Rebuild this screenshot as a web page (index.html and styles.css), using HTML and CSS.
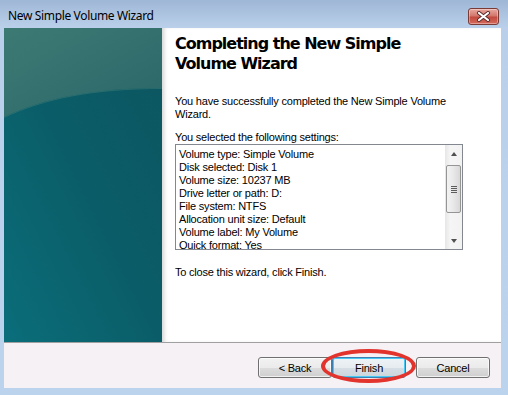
FILE: index.html
```html
<!DOCTYPE html>
<html lang="en">
<head>
  <meta charset="UTF-8">
  <title>New Simple Volume Wizard</title>
  <link rel="stylesheet" href="styles.css">
</head>
<body>

  <div class="window">
    <div class="titlebar">
      <span class="title">New Simple Volume Wizard</span>
      <div class="close">
        <svg width="15" height="11" viewBox="0 0 15 11">
          <path d="M3 2 L12 9 M12 2 L3 9" stroke="#5a2a2a" stroke-width="4" stroke-linecap="round"/>
          <path d="M3 2 L12 9 M12 2 L3 9" stroke="#ffffff" stroke-width="2.2" stroke-linecap="round"/>
        </svg>
      </div>
    </div>

    <div class="client">
      <div class="main">
        <!-- 左の帯 -->
        <div class="banner">
          <svg width="158" height="314" viewBox="0 0 158 314" preserveAspectRatio="none">
            <defs>
              <linearGradient id="base" x1="1" y1="0" x2="0" y2="1">
                <stop offset="0" stop-color="#0c5560"/>
                <stop offset="0.5" stop-color="#0a5d68"/>
                <stop offset="1" stop-color="#0a6e7a"/>
              </linearGradient>
              <linearGradient id="gloss" x1="0" y1="0" x2="1" y2="1">
                <stop offset="0" stop-color="#3e7a74"/>
                <stop offset="1" stop-color="#2a6668"/>
              </linearGradient>
            </defs>
            <rect width="158" height="314" fill="url(#base)"/>
            <path d="M0 0 H158 V60 C90 60 40 70 0 89 Z" fill="url(#gloss)"/>
            <path d="M158 60.5 C90 60.5 40 70.5 0 89.5" fill="none" stroke="#3a7874" stroke-width="1" opacity="0.6"/>
          </svg>
        </div>

        <div class="content">
          <h1>Completing the New Simple<br>Volume Wizard</h1>
          <p class="intro">You have successfully completed the New Simple Volume<br>Wizard.</p>
          <p class="label">You selected the following settings:</p>

          <div class="listbox">
            <div class="items">
              <div>Volume type: Simple Volume</div>
              <div>Disk selected: Disk 1</div>
              <div>Volume size: 10237 MB</div>
              <div>Drive letter or path: D:</div>
              <div>File system: NTFS</div>
              <div>Allocation unit size: Default</div>
              <div>Volume label: My Volume</div>
              <div>Quick format: Yes</div>
            </div>
            <div class="scrollbar">
              <div class="arrow"><span class="tri-up"></span></div>
              <div class="thumb"><span class="grip"></span></div>
              <div class="track"></div>
              <div class="arrow"><span class="tri-down"></span></div>
            </div>
          </div>

          <p class="closing">To close this wizard, click Finish.</p>
        </div>
      </div>

      <div class="footer">
        <button class="btn">&lt; Back</button>
        <button class="btn default">Finish</button>
        <button class="btn cancel">Cancel</button>
        <div class="circle"></div>
      </div>
    </div>
  </div>

</body>
</html>
```

FILE: styles.css
```css
body {
  margin: 0;
  background: #bcd3ee;
  font-family: "Liberation Sans", Arial, sans-serif;
  font-size: 11px;
  letter-spacing: -0.2px;
  color: #000;
}

.window {
  width: 508px;
  height: 395px;
  display: flex;
  flex-direction: column;
  background: linear-gradient(#9fb7d6, #bad0ea 28px, #bcd3ee);
}

.titlebar {
  height: 28px;
  display: flex;
  align-items: flex-start;
  justify-content: space-between;
  padding: 8px 9px 0 8px;
  box-sizing: border-box;
}

.title {
  font-family: "Noto Sans", "Open Sans", sans-serif;
  font-size: 12px;
  line-height: 16px;
  letter-spacing: -0.35px;
  color: #000;
}

.close {
  width: 31px;
  height: 17px;
  box-sizing: border-box;
  border: 1px solid #7a3a36;
  border-radius: 3px;
  background: linear-gradient(#e8a89e, #d3776c 45%, #c24a3e 55%, #d46a5c);
  display: flex;
  align-items: center;
  justify-content: center;
  box-shadow: inset 0 0 0 1px rgba(255, 255, 255, 0.35);
}

.client {
  flex: 1;
  margin: 0 7px 7px 4px;
  display: flex;
  flex-direction: column;
}

.main {
  height: 314px;
  display: flex;
  border-bottom: 1px solid #a0a0a0;
  background: #fff;
}

.banner {
  width: 158px;
  height: 314px;
}

.banner svg {
  display: block;
}

.content {
  flex: 1;
  padding: 6px 0 0 13px;
  box-shadow: inset 4px 0 4px -2px rgba(0, 0, 0, 0.18);
}

h1 {
  margin: 0;
  font-family: "DejaVu Sans", Verdana, sans-serif;
  font-weight: bold;
  font-size: 16px;
  line-height: 20px;
  letter-spacing: -1px;
}

p {
  margin: 0;
  line-height: 13px;
}

.intro {
  margin-top: 21px;
}

.label {
  margin-top: 10px;
}

.listbox {
  width: 288px;
  height: 106px;
  box-sizing: border-box;
  border: 1px solid #828790;
  display: flex;
  background: #fff;
}

.items {
  flex: 1;
  padding: 3px 3px 0;
  overflow: hidden;
  line-height: 13px;
}

.scrollbar {
  width: 17px;
  display: flex;
  flex-direction: column;
  align-items: center;
  background: linear-gradient(to right, #e6e6e6, #f5f5f5 30%, #f2f2f2);
}

.arrow {
  height: 17px;
  width: 17px;
  display: flex;
  align-items: center;
  justify-content: center;
}

.tri-up,
.tri-down {
  width: 0;
  height: 0;
  border-left: 3px solid transparent;
  border-right: 3px solid transparent;
}

.tri-up {
  border-bottom: 4px solid #505050;
}

.tri-down {
  border-top: 4px solid #505050;
}

.thumb {
  width: 15px;
  height: 48px;
  margin-top: 3px;
  box-sizing: border-box;
  border: 1px solid #959595;
  border-radius: 2px;
  background: linear-gradient(to right, #f3f3f3, #e8e8e8 50%, #d8d8d8);
  display: flex;
  align-items: center;
  justify-content: center;
}

.grip {
  width: 6px;
  height: 7px;
  background: repeating-linear-gradient(#5c5c5c 0 1px, transparent 1px 2px);
}

.track {
  flex: 1;
}

.closing {
  margin-top: 16px;
}

.footer {
  position: relative;
  flex: 1;
  display: flex;
  justify-content: flex-end;
  align-items: flex-start;
  padding: 14px 11px 0 0;
  background: #f5f1f5;
}

.btn {
  width: 74px;
  height: 21px;
  padding: 0;
  font-family: "Liberation Sans", Arial, sans-serif;
  font-size: 11px;
  letter-spacing: -0.2px;
  color: #000;
  border: 1px solid #707070;
  border-radius: 3px;
  background: linear-gradient(#f2f2f2, #ebebeb 50%, #dddddd 50%, #cfcfcf);
  box-shadow: inset 0 0 0 1px rgba(255, 255, 255, 0.7);
}

.default {
  border-color: #3c7fb1;
  box-shadow: inset 0 0 0 1px #48c8f4;
  background: linear-gradient(#eef3f6, #e6ecf0 50%, #d6dfe5 50%, #cbd5dc);
}

.cancel {
  margin-left: 10px;
}

/* 赤い丸 */
.circle {
  position: absolute;
  left: 317px;
  top: 6px;
  width: 95px;
  height: 34px;
  box-sizing: border-box;
  border: 4px solid #e2332d;
  border-radius: 50%;
}
```
